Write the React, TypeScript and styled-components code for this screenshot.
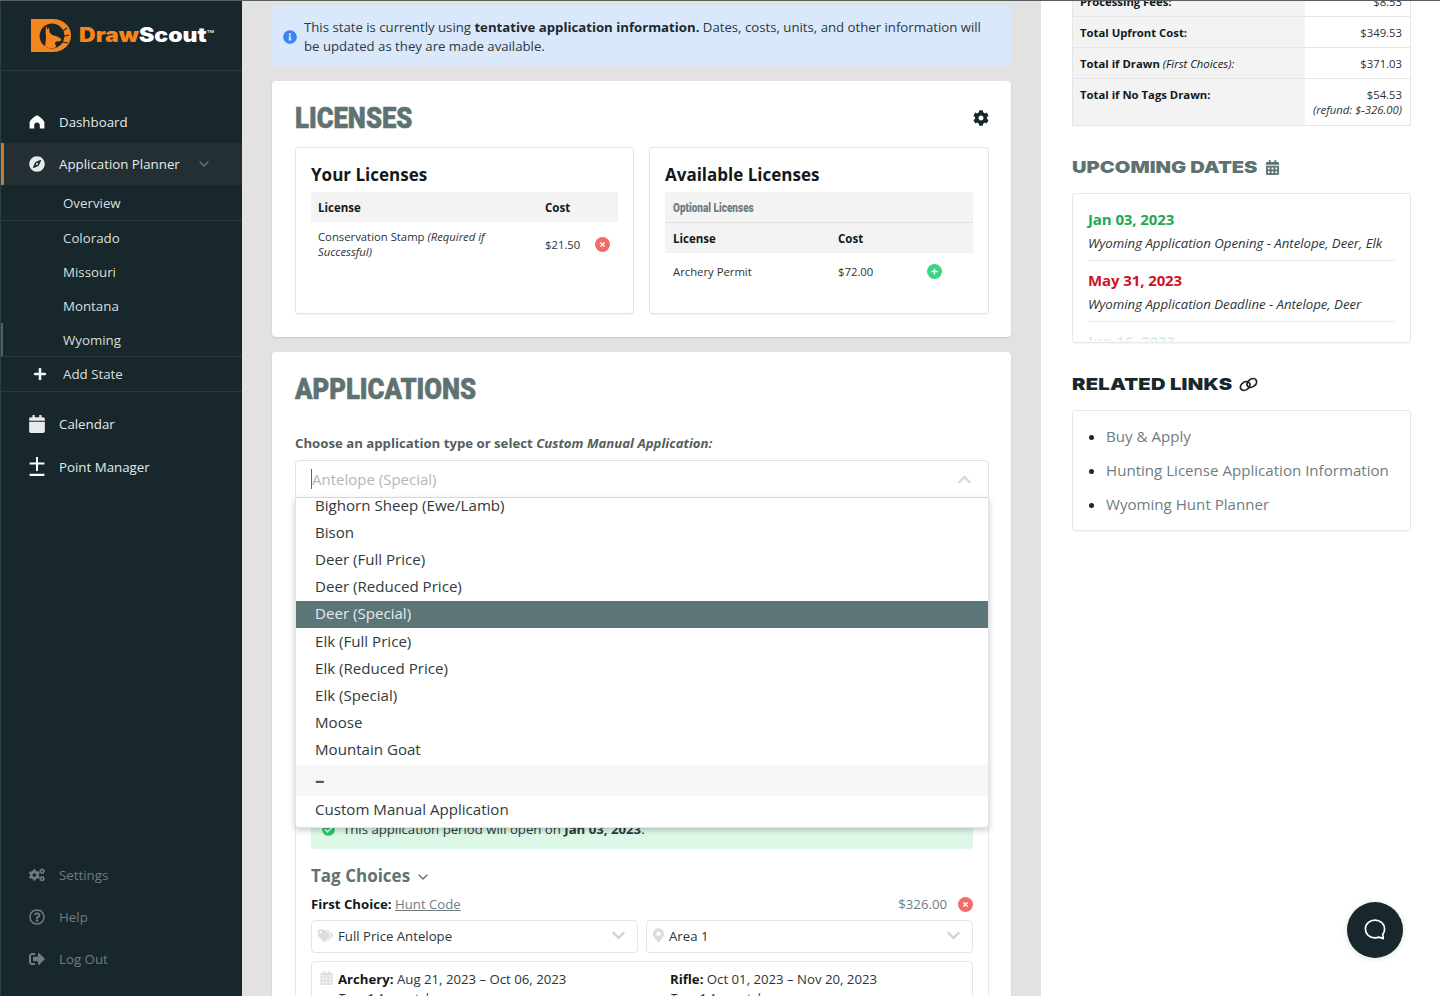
import { ReactNode } from 'react';
import styled, { createGlobalStyle } from 'styled-components';
import {
  FaCalendar,
  FaCalendarAlt,
  FaCheckCircle,
  FaChevronDown,
  FaChevronUp,
  FaCog,
  FaCogs,
  FaCompass,
  FaInfoCircle,
  FaMapMarkerAlt,
  FaPlus,
  FaRegQuestionCircle,
  FaSignOutAlt,
  FaTags,
  FaTimes,
} from 'react-icons/fa';
import { FiChevronDown } from 'react-icons/fi';

const GlobalStyle = createGlobalStyle`
  html, body {
    margin: 0;
    padding: 0;
    height: 100%;
    overflow: hidden;
    background: #fff;
    font-family: "Open Sans", "Liberation Sans", sans-serif;
    color: #1c2a2e;
  }
  * { box-sizing: border-box; }
`;

const Shell = styled.div`
  display: grid;
  grid-template-columns: 242px 799px 399px;
  height: 996px;
  overflow: hidden;
  border-top: 1px solid #5a5f60;
`;

/* sidebar */

const Sidebar = styled.nav`
  display: flex;
  flex-direction: column;
  background: #17272b;
  border-left: 1px solid #24414d;
  height: 995px;
`;

const LogoBar = styled.div`
  display: flex;
  align-items: center;
  gap: 8px;
  height: 70px;
  padding: 0 0 1px 30px;
  border-bottom: 1px solid #263a3f;
`;

const LogoText = styled.span`
  display: inline-block;
  font-family: Inter, "Liberation Sans", sans-serif;
  font-weight: 900;
  font-size: 19.5px;
  color: #f5851f;
  white-space: nowrap;
  transform: scaleX(1.18);
  transform-origin: left center;
  b {
    font-weight: 900;
    color: #fff;
  }
  sup {
    font-size: 4px;
    font-weight: 500;
    color: #fff;
    vertical-align: 9px;
    line-height: 0;
  }
`;

const NavList = styled.div`
  display: flex;
  flex-direction: column;
  padding-top: 30px;
`;

const NavItem = styled.div<{ $active?: boolean; $muted?: boolean }>`
  display: flex;
  align-items: center;
  height: 42px;
  padding-left: ${({ $active }) => ($active ? '25px' : '28px')};
  gap: 14px;
  font-size: 13.3px;
  color: ${({ $muted }) => ($muted ? '#6f7d80' : '#e6eaea')};
  background: ${({ $active }) => ($active ? '#242f33' : 'transparent')};
  border-left: ${({ $active }) => ($active ? '3px solid #c97a32' : 'none')};
  svg {
    flex: 0 0 16px;
    width: 16px;
    height: 16px;
  }
`;

const PointItem = styled(NavItem)`
  margin-top: 1px;
`;

const NavChevron = styled(FiChevronDown)`
  margin-left: 2px;
  color: #64777a;
`;

const CalendarGlyph = styled(FaCalendar)`
  && {
    height: 18px;
  }
`;

const PlusMinusGlyph = styled.svg`
  && {
    height: 20px;
  }
`;

const SubItem = styled.div<{ $edge?: boolean; $line?: boolean; $first?: boolean }>`
  display: flex;
  align-items: center;
  height: ${({ $first }) => ($first ? '35px' : '34px')};
  margin-top: ${({ $first }) => ($first ? '1px' : '0')};
  padding-left: ${({ $edge }) => ($edge ? '60px' : '62px')};
  font-size: 13.3px;
  color: #d9dfdf;
  border-bottom: ${({ $line }) => ($line ? '1px solid #263a3f' : 'none')};
  border-left: ${({ $edge }) => ($edge ? '2px solid #555f61' : 'none')};
`;

const AddState = styled(SubItem)`
  gap: 16px;
  padding-left: 32px;
  margin-bottom: 11px;
  height: 35px;
  svg {
    width: 14px;
    height: 14px;
    color: #eef1f1;
  }
`;

const BottomNav = styled.div`
  display: flex;
  flex-direction: column;
  margin-top: auto;
  padding-bottom: 16px;
`;

/* main column */

const Main = styled.main`
  display: flex;
  flex-direction: column;
  gap: 15px;
  padding: 5px 30px 0;
  background: #e2e2e2;
  overflow: hidden;
`;

const InfoBanner = styled.div`
  display: flex;
  align-items: center;
  gap: 7px;
  flex: 0 0 60px;
  padding: 1px 20px 0 11px;
  background: #d9e8fb;
  border-radius: 4px;
  font-size: 13.2px;
  line-height: 19px;
  color: #2a3a3f;
  svg {
    flex: 0 0 14px;
    width: 14px;
    height: 14px;
    color: #3c82f0;
  }
  b {
    font-weight: 700;
    color: #1c2a2e;
  }
`;

const Card = styled.section`
  position: relative;
  flex: none;
  padding: 24px 22px 23px 23px;
  background: #fff;
  border-radius: 4px;
  box-shadow: 0 1px 2px rgba(0, 0, 0, 0.12);
`;

const CardHead = styled.div`
  display: flex;
  align-items: center;
  justify-content: space-between;
  height: 28px;
  padding-bottom: 2px;
  svg {
    width: 16px;
    height: 16px;
    color: #17272b;
  }
`;

const CondensedTitle = styled.h2`
  display: inline-block;
  margin: 0;
  font-family: Roboto, "Liberation Sans", sans-serif;
  font-weight: 900;
  font-size: 29px;
  line-height: 28px;
  color: #5f7272;
  -webkit-text-stroke: 0.6px #5f7272;
  white-space: nowrap;
  transform: scaleX(0.885);
  transform-origin: left center;
`;

const LicenseGrid = styled.div`
  display: grid;
  grid-template-columns: 339px 340px;
  gap: 15px;
  margin-top: 14px;
`;

const LicenseBox = styled.div`
  height: 167px;
  padding: 14px 15px;
  border: 1px solid #e3e3e3;
  border-radius: 3px;
  box-shadow: 0 1px 1px rgba(0, 0, 0, 0.05);
`;

const BoxTitle = styled.h3`
  margin: 0 0 6px;
  padding-top: 1px;
  height: 24px;
  font-size: 17px;
  line-height: 24px;
  font-weight: 700;
  color: #11191b;
`;

const TableHead = styled.div<{ $cost: number; $inset: number }>`
  display: grid;
  grid-template-columns: ${({ $cost }) => $cost}px 1fr;
  align-items: center;
  height: 30px;
  padding-left: ${({ $inset }) => $inset}px;
  background: #f3f3f3;
  font-size: 11.5px;
  font-weight: 700;
  color: #11191b;
`;

const OptionalRow = styled.div`
  display: flex;
  align-items: center;
  height: 31px;
  padding-left: 8px;
  background: #f3f3f3;
  border-bottom: 1px solid #e2e2e2;
  font-family: Roboto, "Liberation Sans", sans-serif;
  font-weight: 900;
  font-size: 12.5px;
  color: #6f7d82;
  span {
    display: inline-block;
    white-space: nowrap;
    transform: scaleX(0.8);
    transform-origin: left center;
  }
`;

const TableRow = styled.div<{ $cost: number; $inset: number; $tall?: boolean }>`
  display: grid;
  grid-template-columns: ${({ $cost }) => $cost}px 50px 1fr;
  align-items: center;
  padding: ${({ $tall }) => ($tall ? '7px' : '11px')} 0 0 ${({ $inset }) => $inset}px;
  font-size: 11.3px;
  line-height: 15px;
  color: #2a3438;
  i {
    font-style: italic;
  }
  > div:first-child {
    padding-right: 36px;
  }
`;

const RoundButton = styled.span<{ $color: string }>`
  display: inline-flex;
  align-items: center;
  justify-content: center;
  width: 15px;
  height: 15px;
  border-radius: 50%;
  background: ${({ $color }) => $color};
  color: #fff;
  svg {
    width: 7px;
    height: 7px;
  }
`;

const RowAction = styled.div<{ $offset: number }>`
  display: flex;
  padding-left: ${({ $offset }) => $offset}px;
`;

const FieldLabel = styled.div`
  margin-top: 30px;
  font-size: 13.2px;
  line-height: 18px;
  font-weight: 700;
  color: #555e60;
  i {
    font-style: italic;
  }
`;

const SelectWrap = styled.div`
  position: relative;
  margin-top: 8px;
  width: 694px;
`;

const SelectInput = styled.div`
  display: flex;
  align-items: center;
  justify-content: space-between;
  height: 38px;
  padding: 0 16px;
  background: #fff;
  border: 1px solid #dfe3e6;
  border-radius: 4px 4px 0 0;
  font-size: 15px;
  color: #b4b6b6;
  svg {
    width: 15px;
    height: 15px;
    color: #d3dbe2;
  }
`;

const Placeholder = styled.span`
  border-left: 1px solid #5f6a6d;
  line-height: 20px;
  margin-left: -1px;
`;

const Menu = styled.ul`
  position: absolute;
  z-index: 5;
  top: 38px;
  left: 0;
  right: 0;
  height: 330px;
  margin: 0;
  padding: 0;
  list-style: none;
  overflow: hidden;
  background: #fff;
  border: 1px solid #e2e5e7;
  border-top: none;
  border-radius: 0 0 4px 4px;
  box-shadow: 0 2px 6px rgba(0, 0, 0, 0.22);
`;

const MenuOption = styled.li<{ $active?: boolean; $clipped?: boolean }>`
  display: flex;
  align-items: center;
  height: 27.2px;
  margin-top: ${({ $clipped }) => ($clipped ? '-6px' : '0')};
  padding: 0 0 2px 19px;
  font-size: 15.1px;
  color: ${({ $active }) => ($active ? '#e4ecec' : '#30393c')};
  background: ${({ $active }) => ($active ? '#5c7678' : 'transparent')};
`;

const CustomOption = styled(MenuOption)`
  padding-bottom: 0;
`;

const MenuDivider = styled.li`
  display: flex;
  align-items: center;
  height: 31px;
  margin-top: 1px;
  padding-left: 19px;
  background: #f7f7f7;
  font-size: 19px;
  font-weight: 700;
  color: #555;
`;

const ChoicePanel = styled.div`
  margin-top: 12px;
  width: 694px;
  height: 600px;
  padding: 298px 15px 0;
  border: 1px solid #e8e8e8;
  border-radius: 3px;
`;

const OpenAlert = styled.div`
  display: flex;
  align-items: center;
  gap: 8px;
  height: 40px;
  padding-left: 11px;
  background: #ddf8e6;
  border-radius: 4px;
  font-size: 13.2px;
  color: #2a3a3f;
  svg {
    width: 13px;
    height: 13px;
    color: #2bc46a;
  }
  b {
    font-weight: 700;
  }
`;

const TagTitle = styled.div`
  display: flex;
  align-items: center;
  gap: 5px;
  margin-top: 15px;
  font-size: 17px;
  line-height: 24px;
  font-weight: 700;
  color: #5f7272;
  svg {
    width: 16px;
    height: 16px;
    margin-top: 2px;
  }
`;

const ChoiceRow = styled.div`
  display: flex;
  align-items: center;
  justify-content: space-between;
  margin-top: 6px;
  height: 20px;
  font-size: 13.2px;
  color: #11191b;
  b {
    font-weight: 700;
  }
  a {
    color: #6f7d82;
    text-decoration: underline;
  }
`;

const Price = styled.div`
  display: flex;
  align-items: center;
  gap: 11px;
  color: #6f7d82;
`;

const SelectRow = styled.div`
  display: grid;
  grid-template-columns: 327px 327px;
  gap: 8px;
  margin-top: 6px;
`;

const TagSelect = styled.div<{ $icon: number }>`
  display: flex;
  align-items: center;
  gap: 5px;
  height: 33px;
  padding: 0 11px 2px 6px;
  border: 1px solid #e3e5e7;
  border-radius: 4px;
  font-size: 13.2px;
  color: #2a3438;
  svg {
    flex: none;
    width: ${({ $icon }) => $icon}px;
    height: 15px;
    color: #dcdcdc;
  }
  svg:last-child {
    margin-left: auto;
    width: 15px;
    color: #ccd5de;
  }
`;

const DatesBox = styled.div`
  display: grid;
  grid-template-columns: 350px 1fr;
  margin-top: 8px;
  padding: 8px 15px 0 8px;
  border: 1px solid #e3e5e7;
  border-radius: 4px;
  font-size: 13.2px;
  line-height: 19px;
  color: #2a3438;
  b {
    font-weight: 700;
    color: #11191b;
  }
  i {
    display: block;
    font-size: 12.5px;
  }
`;

const DateCell = styled.div`
  display: flex;
  gap: 5px;
  svg {
    flex: none;
    margin-top: 1px;
    width: 13px;
    height: 14px;
    color: #dedede;
  }
`;

/* right column */

const Aside = styled.aside`
  padding: 0 29px 0 31px;
  overflow: hidden;
  background: #fff;
`;

const CostTable = styled.div`
  margin-top: -15px;
  border: 1px solid #e6e6e6;
  border-top: none;
`;

const CostRow = styled.div<{ $tall?: boolean }>`
  display: grid;
  grid-template-columns: 232px 1fr;
  height: ${({ $tall }) => ($tall ? '46px' : '31px')};
  font-size: 11.3px;
  line-height: 15px;
  &:not(:last-child) {
    border-bottom: 1px solid #e6e6e6;
  }
`;

const CostLabel = styled.div`
  padding: 8px 7px 0;
  background: #f3f3f3;
  font-weight: 700;
  color: #11191b;
  i {
    font-weight: 400;
  }
`;

const CostValue = styled.div`
  padding: 8px 8px 0 0;
  text-align: right;
  color: #2a3438;
  i {
    display: block;
  }
`;

const WideTitle = styled.h2<{ $dark?: boolean; $extra: number }>`
  display: flex;
  align-items: center;
  gap: 8px;
  margin: 29px 0 0;
  height: 24px;
  font-family: Inter, "Liberation Sans", sans-serif;
  font-weight: 900;
  font-size: 16.5px;
  letter-spacing: ${({ $dark }) => ($dark ? '0.2px' : '0')};
  color: ${({ $dark }) => ($dark ? '#17272b' : '#5f7272')};
  span {
    display: inline-block;
    margin-right: ${({ $extra }) => $extra}px;
    white-space: nowrap;
    transform: scaleX(1.22);
    transform-origin: left center;
  }
  svg {
    width: 15px;
    height: 15px;
  }
`;

const LinkGlyph = styled.svg`
  && {
    width: 19px;
    height: 15px;
  }
`;

const DatesList = styled.div`
  position: relative;
  height: 150px;
  margin-top: 14px;
  padding: 13px 15px 0;
  overflow: hidden;
  border: 1px solid #e8e8e8;
  border-radius: 3px;
  box-shadow: 0 1px 1px rgba(0, 0, 0, 0.04);
  &::after {
    content: '';
    position: absolute;
    left: 0;
    right: 0;
    bottom: 0;
    height: 16px;
    background: linear-gradient(rgba(255, 255, 255, 0.4), rgba(255, 255, 255, 0.95));
  }
`;

const DateEntry = styled.div`
  height: 54px;
  margin-bottom: 7px;
  border-bottom: 1px solid #ececec;
`;

const DateHead = styled.div<{ $color: string }>`
  font-size: 15px;
  line-height: 24px;
  font-weight: 700;
  letter-spacing: -0.1px;
  color: ${({ $color }) => $color};
`;

const DateNote = styled.div`
  margin-top: 1px;
  font-size: 13.2px;
  line-height: 22px;
  font-style: italic;
  color: #2a3438;
`;

const LinkList = styled.ul`
  margin: 14px 0 0;
  padding: 8px 15px 9px 33px;
  list-style: disc;
  border: 1px solid #e8e8e8;
  border-radius: 3px;
  box-shadow: 0 1px 1px rgba(0, 0, 0, 0.04);
  font-size: 15.1px;
  line-height: 34px;
  color: #17272b;
  li span {
    color: #6f7d82;
  }
`;

const ChatButton = styled.button`
  position: fixed;
  right: 37px;
  bottom: 38px;
  display: flex;
  align-items: center;
  justify-content: center;
  width: 56px;
  height: 56px;
  padding: 0;
  border: none;
  border-radius: 50%;
  background: #17272b;
  box-shadow: 0 1px 6px rgba(0, 0, 0, 0.12);
`;

const LogoMark = () => (
  <svg width="40" height="33" viewBox="0 0 40 33" aria-hidden="true">
    <path d="M0 0h22c10 0 18 7 18 16.5S32 33 22 33H0V0z" fill="#f5851f" />
    <circle cx="21" cy="17" r="12.4" fill="#17272b" />
    <path
      d="M15 6.5l1.6 4.2 1.4-2.4.6 5.2 2.6 2.6 4.6 1.2 4.4 2.4-.4 2.4-4.6.4-1.4 1.4 1.6 4a12.4 12.4 0 0 1-11.4-.4c.8-5 1.4-9.4.6-13.4z"
      fill="#f5851f"
    />
    <path d="M29 14l7-5M30 18l8-2M31 23l6 1" stroke="#17272b" strokeWidth="1.2" />
  </svg>
);

const HomeIcon = () => (
  <svg viewBox="0 0 16 16" fill="#fff" aria-hidden="true">
    <path d="M8 1.2C11 2.6 14.2 5.4 15.4 8v6.6h-4.6v-3.4c0-1.6-1.2-2.8-2.8-2.8s-2.8 1.2-2.8 2.8v3.4H.6V8C1.8 5.4 5 2.6 8 1.2z" />
  </svg>
);

const PlusMinusIcon = () => (
  <PlusMinusGlyph viewBox="0 0 16 20" fill="#fff" aria-hidden="true">
    <path d="M7 0h2v5.5h6.4v2H9V14H7V7.5H.6v-2H7V0zM.6 16.8h14.8V19H.6z" />
  </PlusMinusGlyph>
);

const RingsIcon = () => (
  <LinkGlyph viewBox="0 0 19 15" fill="none" stroke="currentColor" strokeWidth="1.8" aria-hidden="true">
    <ellipse cx="6.2" cy="9" rx="5.2" ry="3.8" transform="rotate(-35 6.2 9)" />
    <ellipse cx="12.8" cy="6" rx="5.2" ry="3.8" transform="rotate(-35 12.8 6)" />
  </LinkGlyph>
);

const ChatIcon = () => (
  <svg width="24" height="24" viewBox="0 0 24 24" fill="none" aria-hidden="true">
    <path
      d="M12 2.2c5.4 0 9.6 3.7 9.6 8.7 0 2.1-.7 4-1.9 5.5l.6 4.2-4.3-1.5c-1.2.5-2.6.7-4 .7-5.4 0-9.6-3.8-9.6-8.9S6.6 2.2 12 2.2z"
      stroke="#fff"
      strokeWidth="1.7"
      strokeLinejoin="round"
    />
  </svg>
);

const navIcon = (icon: ReactNode, label: string, muted = false) => (
  <NavItem $muted={muted} key={label}>
    {icon}
    {label}
  </NavItem>
);

const menuOptions = [
  'Bison',
  'Deer (Full Price)',
  'Deer (Reduced Price)',
  'Deer (Special)',
  'Elk (Full Price)',
  'Elk (Reduced Price)',
  'Elk (Special)',
  'Moose',
  'Mountain Goat',
];

export default function App() {
  return (
    <>
      <GlobalStyle />
      <Shell>
        <Sidebar>
          <LogoBar>
            <LogoMark />
            <LogoText>
              Draw<b>Scout</b>
              <sup>TM</sup>
            </LogoText>
          </LogoBar>
          <NavList>
            {navIcon(<HomeIcon />, 'Dashboard')}
            <NavItem $active>
              <FaCompass />
              Application Planner
              <NavChevron />
            </NavItem>
            <SubItem $line $first>Overview</SubItem>
            <SubItem>Colorado</SubItem>
            <SubItem>Missouri</SubItem>
            <SubItem>Montana</SubItem>
            <SubItem $line $edge>Wyoming</SubItem>
            <AddState $line>
              <FaPlus />
              Add State
            </AddState>
            {navIcon(<CalendarGlyph />, 'Calendar')}
            <PointItem>
              <PlusMinusIcon />
              Point Manager
            </PointItem>
          </NavList>
          <BottomNav>
            {navIcon(<FaCogs />, 'Settings', true)}
            {navIcon(<FaRegQuestionCircle />, 'Help', true)}
            {navIcon(<FaSignOutAlt />, 'Log Out', true)}
          </BottomNav>
        </Sidebar>

        <Main>
          <InfoBanner>
            <FaInfoCircle />
            <div>
              This state is currently using <b>tentative application information.</b> Dates, costs,
              units, and other information will be updated as they are made available.
            </div>
          </InfoBanner>

          <Card>
            <CardHead>
              <CondensedTitle>LICENSES</CondensedTitle>
              <FaCog />
            </CardHead>
            <LicenseGrid>
              <LicenseBox>
                <BoxTitle>Your Licenses</BoxTitle>
                <TableHead $cost={227} $inset={7}>
                  <span>License</span>
                  <span>Cost</span>
                </TableHead>
                <TableRow $cost={227} $inset={7} $tall>
                  <div>
                    Conservation Stamp <i>(Required if Successful)</i>
                  </div>
                  <div>$21.50</div>
                  <RowAction $offset={0}>
                    <RoundButton $color="#f36c6c">
                      <FaTimes />
                    </RoundButton>
                  </RowAction>
                </TableRow>
              </LicenseBox>
              <LicenseBox>
                <BoxTitle>Available Licenses</BoxTitle>
                <OptionalRow>
                  <span>Optional Licenses</span>
                </OptionalRow>
                <TableHead $cost={165} $inset={8}>
                  <span>License</span>
                  <span>Cost</span>
                </TableHead>
                <TableRow $cost={165} $inset={8}>
                  <div>Archery Permit</div>
                  <div>$72.00</div>
                  <RowAction $offset={39}>
                    <RoundButton $color="#3dd47f">
                      <FaPlus />
                    </RoundButton>
                  </RowAction>
                </TableRow>
              </LicenseBox>
            </LicenseGrid>
          </Card>

          <Card>
            <CardHead>
              <CondensedTitle>APPLICATIONS</CondensedTitle>
            </CardHead>
            <FieldLabel>
              Choose an application type or select <i>Custom Manual Application:</i>
            </FieldLabel>
            <SelectWrap>
              <SelectInput>
                <Placeholder>Antelope (Special)</Placeholder>
                <FaChevronUp />
              </SelectInput>
              <Menu>
                <MenuOption $clipped>Bighorn Sheep (Ewe/Lamb)</MenuOption>
                {menuOptions.map(option => (
                  <MenuOption key={option} $active={option === 'Deer (Special)'}>
                    {option}
                  </MenuOption>
                ))}
                <MenuDivider>–</MenuDivider>
                <CustomOption>Custom Manual Application</CustomOption>
              </Menu>
            </SelectWrap>
            <ChoicePanel>
              <OpenAlert>
                <FaCheckCircle />
                <div>
                  This application period will open on <b>Jan 03, 2023</b>.
                </div>
              </OpenAlert>
              <TagTitle>
                Tag Choices
                <FiChevronDown />
              </TagTitle>
              <ChoiceRow>
                <div>
                  <b>First Choice:</b> <a>Hunt Code</a>
                </div>
                <Price>
                  $326.00
                  <RoundButton $color="#f36c6c">
                    <FaTimes />
                  </RoundButton>
                </Price>
              </ChoiceRow>
              <SelectRow>
                <TagSelect $icon={15}>
                  <FaTags />
                  Full Price Antelope
                  <FaChevronDown />
                </TagSelect>
                <TagSelect $icon={11}>
                  <FaMapMarkerAlt />
                  Area 1
                  <FaChevronDown />
                </TagSelect>
              </SelectRow>
              <DatesBox>
                <DateCell>
                  <FaCalendarAlt />
                  <div>
                    <b>Archery:</b> Aug 21, 2023 – Oct 06, 2023
                    <i>Type 1 Any antelope</i>
                  </div>
                </DateCell>
                <DateCell>
                  <div>
                    <b>Rifle:</b> Oct 01, 2023 – Nov 20, 2023
                    <i>Type 1 Any antelope</i>
                  </div>
                </DateCell>
              </DatesBox>
            </ChoicePanel>
          </Card>
        </Main>

        <Aside>
          <CostTable>
            <CostRow>
              <CostLabel>Processing Fees:</CostLabel>
              <CostValue>$8.53</CostValue>
            </CostRow>
            <CostRow>
              <CostLabel>Total Upfront Cost:</CostLabel>
              <CostValue>$349.53</CostValue>
            </CostRow>
            <CostRow>
              <CostLabel>
                Total if Drawn <i>(First Choices):</i>
              </CostLabel>
              <CostValue>$371.03</CostValue>
            </CostRow>
            <CostRow $tall>
              <CostLabel>Total if No Tags Drawn:</CostLabel>
              <CostValue>
                $54.53
                <i>(refund: $-326.00)</i>
              </CostValue>
            </CostRow>
          </CostTable>

          <WideTitle $extra={33}>
            <span>UPCOMING DATES</span>
            <FaCalendarAlt />
          </WideTitle>
          <DatesList>
            <DateEntry>
              <DateHead $color="#1da851">Jan 03, 2023</DateHead>
              <DateNote>Wyoming Application Opening - Antelope, Deer, Elk</DateNote>
            </DateEntry>
            <DateEntry>
              <DateHead $color="#d0121f">May 31, 2023</DateHead>
              <DateNote>Wyoming Application Deadline - Antelope, Deer</DateNote>
            </DateEntry>
            <DateHead $color="#1da851">Jun 16, 2023</DateHead>
          </DatesList>

          <WideTitle $dark $extra={27}>
            <span>RELATED LINKS</span>
            <RingsIcon />
          </WideTitle>
          <LinkList>
            <li><span>Buy &amp; Apply</span></li>
            <li><span>Hunting License Application Information</span></li>
            <li><span>Wyoming Hunt Planner</span></li>
          </LinkList>
        </Aside>
      </Shell>
      <ChatButton aria-label="Chat">
        <ChatIcon />
      </ChatButton>
    </>
  );
}
